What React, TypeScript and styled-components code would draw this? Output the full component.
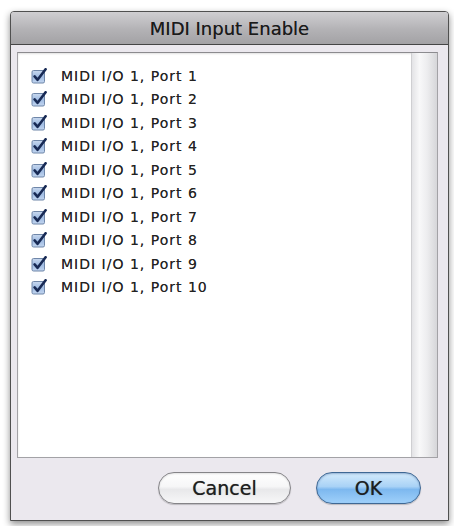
import styled, { createGlobalStyle } from 'styled-components';

const GlobalStyle = createGlobalStyle`
	html, body {
		margin: 0;
		padding: 0;
		background: #ffffff;
	}
`;

const Page = styled.div`
	width: 454px;
	height: 526px;
	box-sizing: border-box;
	padding: 11px 5px 0 10px;
	font-family: 'DejaVu Sans', Verdana, sans-serif;
`;

const Window = styled.div`
	width: 439px;
	height: 510px;
	box-sizing: border-box;
	display: flex;
	flex-direction: column;
	background: #ebe8ee;
	border: 1px solid #505050;
	border-radius: 4px 4px 0 0;
	box-shadow: 0 3px 7px rgba(0, 0, 0, 0.45);
	overflow: hidden;
`;

const TitleBar = styled.div`
	height: 32px;
	flex-shrink: 0;
	display: flex;
	align-items: center;
	justify-content: center;
	background: linear-gradient(#cfced1, #b3b2b5 55%, #a3a2a5);
	border-bottom: 1px solid #454545;
	font-size: 18px;
	color: #1a1a1a;
	text-shadow: 0 0 0.6px rgba(0, 0, 0, 0.6);
`;

const Body = styled.div`
	flex: 1;
	display: flex;
	flex-direction: column;
	padding: 7px 10px 0 6px;
`;

const ListBox = styled.div`
	height: 406px;
	box-sizing: border-box;
	display: flex;
	background: #ffffff;
	border: 1px solid #a3a2a6;
	border-top-color: #8c8b8f;
	box-shadow: inset 0 1px 2px rgba(0, 0, 0, 0.12);
`;

const List = styled.div`
	flex: 1;
	padding: 11px 0 0 13px;
`;

const Row = styled.div`
	height: 23.5px;
	display: flex;
	align-items: center;
	gap: 14px;
`;

const Label = styled.span`
	font-size: 14px;
	letter-spacing: 1px;
	color: #222222;
	white-space: nowrap;
	text-shadow: 0 0 0.6px rgba(0, 0, 0, 0.55);
`;

const ScrollTrack = styled.div`
	width: 25px;
	flex-shrink: 0;
	border-left: 1px solid #cfcfd2;
	background: linear-gradient(90deg, #e3e3e6, #f8f8f9 30%, #ededef 60%, #d6d6d9);
`;

const Footer = styled.div`
	flex: 1;
	display: flex;
	justify-content: flex-end;
	align-items: flex-start;
	gap: 25px;
	padding: 14px 17px 0 0;
`;

const Button = styled.button<{ $primary?: boolean; $width: number }>`
	width: ${(p) => p.$width}px;
	height: 32px;
	border-radius: 16px;
	font-family: 'DejaVu Sans', Verdana, sans-serif;
	font-size: 19px;
	color: #1e1e1e;
	padding: 0;
	text-shadow: 0 0 0.7px rgba(0, 0, 0, 0.6);
	border: 1.5px solid ${(p) => (p.$primary ? '#3f6894' : '#858488')};
	background: ${(p) =>
		p.$primary
			? 'linear-gradient(#d4ebfc, #a9d2f6 45%, #7db8ef 55%, #9fd0fa)'
			: 'linear-gradient(#ffffff, #f6f6f7 45%, #e8e8ea 55%, #f7f7f8)'};
	box-shadow: 0 1px 1px rgba(0, 0, 0, 0.2),
		inset 0 1px 2px ${(p) => (p.$primary ? 'rgba(30, 70, 130, 0.35)' : 'rgba(0, 0, 0, 0.12)')};
`;

const CheckBox = () => (
	<svg width="16" height="16" viewBox="0 0 16 16">
		<defs>
			<linearGradient id="cb" x1="0" y1="0" x2="0" y2="1">
				<stop offset="0" stopColor="#c9d9ef" />
				<stop offset="0.5" stopColor="#9fbbe2" />
				<stop offset="1" stopColor="#c3d6f0" />
			</linearGradient>
		</defs>
		<rect x="1" y="2.5" width="12.5" height="12.5" rx="1.5" fill="url(#cb)" stroke="#6f86a8" strokeWidth="1" />
		<path d="M3.6 8.4 L6.6 11.8 L14.6 1.2" fill="none" stroke="#182a55" strokeWidth="2.6" strokeLinecap="round" strokeLinejoin="round" />
	</svg>
);

const ports = Array.from({ length: 10 }, (_, i) => `MIDI I/O 1, Port ${i + 1}`);

const App = () => (
	<>
		<GlobalStyle />
		<Page>
			<Window>
				<TitleBar>MIDI Input Enable</TitleBar>
				<Body>
					<ListBox>
						<List>
							{ports.map((name) => (
								<Row key={name}>
									<CheckBox />
									<Label>{name}</Label>
								</Row>
							))}
						</List>
						<ScrollTrack />
					</ListBox>
					<Footer>
						<Button $width={133}>Cancel</Button>
						<Button $primary $width={105}>OK</Button>
					</Footer>
				</Body>
			</Window>
		</Page>
	</>
);

export default App;
